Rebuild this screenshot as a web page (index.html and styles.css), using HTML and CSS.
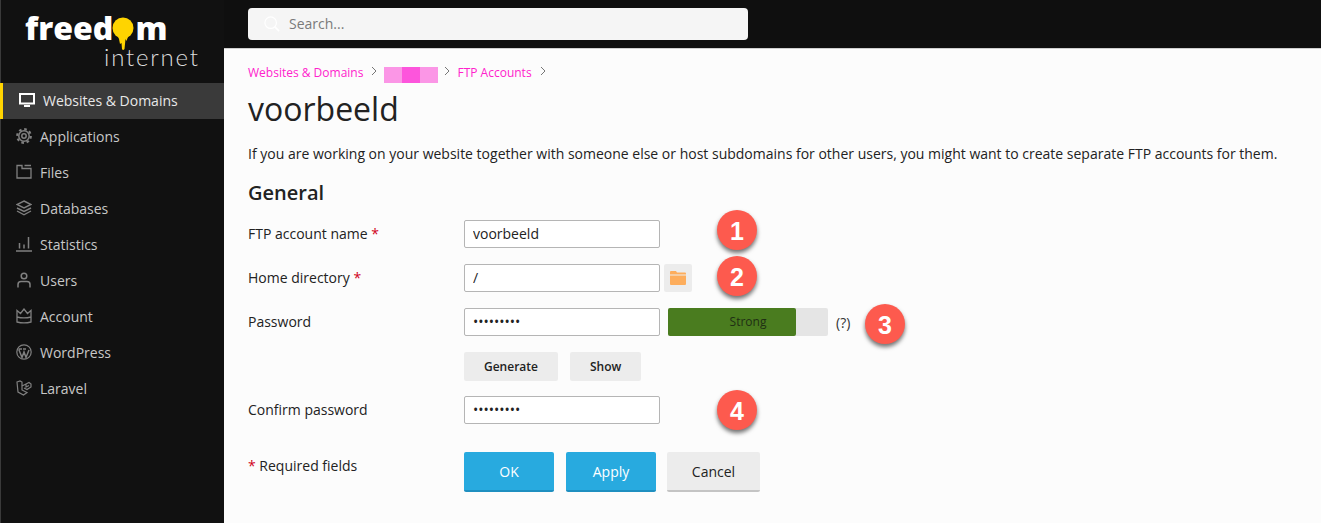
FILE: index.html
```html
<!DOCTYPE html>
<html lang="en">
<head>
    <meta charset="UTF-8">
    <meta name="viewport" content="width=device-width, initial-scale=1.0">
    <title>FTP Accounts - voorbeeld</title>
    <link rel="stylesheet" href="styles.css">
</head>
<body>
    <aside class="sidebar">
        <div class="logo">
            <div class="logo-top">freed<svg class="logo-drop" viewBox="0 0 22 34" width="22" height="34"><circle cx="11" cy="11" r="10.500" fill="#ffd400"/><path d="M5 17 H17 L14.500 24 L13.500 22 L12.500 32 Q11 34 10 32 L9.500 26 L8 27 L7 22 Z" fill="#ffd400"/></svg>m</div>
            <div class="logo-sub">internet</div>
        </div>
        <nav class="nav">
            <a class="nav-item active" href="#">
                <svg class="nav-icon" viewBox="0 0 16 16"><path d="M1 2 H15 V11.500 H1 Z M5 14 H11" fill="none" stroke="currentColor" stroke-width="2"/></svg>
                Websites &amp; Domains
            </a>
            <a class="nav-item" href="#">
                <svg class="nav-icon" viewBox="0 0 16 16" fill="none" stroke="currentColor"><circle cx="8" cy="8" r="2.200" stroke-width="1.500"/><circle cx="8" cy="8" r="5.200" stroke-width="1.500"/><circle cx="8" cy="8" r="6.800" stroke-width="2.200" stroke-dasharray="2.600 2.740"/></svg>
                Applications
            </a>
            <a class="nav-item" href="#">
                <svg class="nav-icon" viewBox="0 0 16 16" fill="none" stroke="currentColor" stroke-width="1.300"><path d="M1 1.500 H6 V4.500 H15 V14 H1 Z M8.500 1.500 H15"/></svg>
                Files
            </a>
            <a class="nav-item" href="#">
                <svg class="nav-icon" viewBox="0 0 16 16" fill="none" stroke="currentColor" stroke-width="1.400"><path d="M8 1 L15 4.500 L8 8 L1 4.500 Z M1 8 L8 11.500 L15 8 M1 11 L8 14.800 L15 11"/></svg>
                Databases
            </a>
            <a class="nav-item" href="#">
                <svg class="nav-icon" viewBox="0 0 16 16" fill="none" stroke="currentColor" stroke-width="1.500"><path d="M0 15 H16 M3.500 7 V12.500 M8 8.500 V12.500 M12.500 1 V12.500"/></svg>
                Statistics
            </a>
            <a class="nav-item" href="#">
                <svg class="nav-icon" viewBox="0 0 16 16" fill="none" stroke="currentColor" stroke-width="1.500"><circle cx="8" cy="4" r="2.800"/><path d="M2 15.500 V12.500 Q2 9.500 5 9.500 H11 Q14 9.500 14 12.500 V15.500"/></svg>
                Users
            </a>
            <a class="nav-item" href="#">
                <svg class="nav-icon" viewBox="0 0 16 16" fill="none" stroke="currentColor" stroke-width="1.300"><path d="M1 2.500 L4.500 5.500 L8 1 L11.500 5.500 L15 2.500 V14 Q8 15.800 1 14 Z M1 9 Q8 10.800 15 9"/></svg>
                Account
            </a>
            <a class="nav-item" href="#">
                <svg class="nav-icon" viewBox="0 0 16 16" fill="none" stroke="currentColor"><circle cx="8" cy="8" r="7.200" stroke-width="1.200"/><path d="M2.800 5.500 L6 13.500 L8 8 L10 13.500 L13 6 M2.500 5 H6 M7 5 H10" stroke-width="1.500"/></svg>
                WordPress
            </a>
            <a class="nav-item" href="#">
                <svg class="nav-icon" viewBox="0 0 16 16" fill="none" stroke="currentColor" stroke-width="1.200"><path d="M1 2 L4 1 L6 2 V10 L11 12.500 L7.500 15 L2 12 Z M6 6 L10 4 L13 2.500 L15 4 V7 L11 9.500 L8 8 M10 4 V7 L13 5.500"/></svg>
                Laravel
            </a>
        </nav>
    </aside>

    <div class="page">
        <header class="topbar">
            <div class="search">
                <svg class="search-icon" viewBox="0 0 18 18" fill="none" stroke="#fff" stroke-width="1.300"><circle cx="7.500" cy="7.500" r="6.500"/><path d="M12 12 L17 17" stroke-width="1.800"/></svg>
                <span>Search...</span>
            </div>
        </header>

        <main class="content">
            <div class="breadcrumb">
                <a href="#">Websites &amp; Domains</a>
                <svg class="crumb-sep" viewBox="0 0 6 10"><path d="M1 1 L5 5 L1 9" fill="none" stroke="#777"/></svg>
                <div class="blur"><i></i><i class="mid"></i><i></i></div>
                <svg class="crumb-sep" viewBox="0 0 6 10"><path d="M1 1 L5 5 L1 9" fill="none" stroke="#777"/></svg>
                <a href="#">FTP Accounts</a>
                <svg class="crumb-sep" viewBox="0 0 6 10"><path d="M1 1 L5 5 L1 9" fill="none" stroke="#777"/></svg>
            </div>

            <h1>voorbeeld</h1>
            <p class="intro">If you are working on your website together with someone else or host subdomains for other users, you might want to create separate FTP accounts for them.</p>
            <h2>General</h2>

            <form class="form">
                <div class="form-row">
                    <label for="name">FTP account name <span class="req">*</span></label>
                    <input id="name" type="text" value="voorbeeld">
                    <span class="badge badge-1">1</span>
                </div>
                <div class="form-row">
                    <label for="home">Home directory <span class="req">*</span></label>
                    <input id="home" type="text" value="/">
                    <button type="button" class="folder-btn">
                        <svg viewBox="0 0 16 14" width="16" height="14"><path d="M0 1 Q0 0 1 0 H6 L7 1.500 H15 Q16 1.500 16 2.500 V3.500 H0 Z M0 4.500 H16 V13 Q16 14 15 14 H1 Q0 14 0 13 Z" fill="#fdad5c"/></svg>
                    </button>
                    <span class="badge badge-2">2</span>
                </div>
                <div class="form-row">
                    <label for="pwd">Password</label>
                    <input id="pwd" type="password" value="voorbeeld">
                    <div class="strength"><div class="strength-bar"><span>Strong</span></div></div>
                    <span class="hint">(?)</span>
                    <span class="badge badge-3">3</span>
                </div>
                <div class="form-row form-row-btns">
                    <button type="button" class="small-btn">Generate</button>
                    <button type="button" class="small-btn">Show</button>
                </div>
                <div class="form-row">
                    <label for="pwd2">Confirm password</label>
                    <input id="pwd2" type="password" value="voorbeeld">
                    <span class="badge badge-4">4</span>
                </div>
                <div class="form-actions">
                    <div class="required-note"><span class="req">*</span> Required fields</div>
                    <button type="button" class="btn btn-primary">OK</button>
                    <button type="button" class="btn btn-primary">Apply</button>
                    <button type="button" class="btn btn-cancel">Cancel</button>
                </div>
            </form>
        </main>
    </div>
</body>
</html>
```

FILE: styles.css
```css
/* General Reset */
* {
    box-sizing: border-box;
    margin: 0;
    padding: 0;
    font-family: "Open Sans", "Liberation Sans", sans-serif;
}

html, body {
    height: 100%;
    overflow: hidden;
}

body {
    display: flex;
    background-color: #0f0f0f;
    color: #222;
    font-size: 14px;
}

/* Sidebar */
.sidebar {
    width: 224px;
    flex-shrink: 0;
    background-color: #111;
    border-left: 1px solid #3a3a3a;
}

.logo {
    height: 83px;
    padding: 12px 0 0 24px;
    color: #fff;
}

.logo-top {
    display: flex;
    align-items: flex-start;
    height: 32px;
    font-size: 32px;
    font-weight: 800;
    line-height: 32px;
}

.logo-drop {
    margin: 5px 1px 0 -1px;
    flex-shrink: 0;
}

.logo-sub {
    margin: 1px 0 0 79px;
    font-family: "Lato", sans-serif;
    font-size: 24px;
    font-weight: 300;
    line-height: 24px;
    letter-spacing: 1.800px;
    color: #ddd;
}

.nav-item {
    display: flex;
    align-items: center;
    height: 36px;
    padding-left: 15px;
    padding-bottom: 2px;
    color: #c8c8c8;
    text-decoration: none;
}

.nav-icon {
    width: 16px;
    height: 16px;
    margin-right: 8px;
    flex-shrink: 0;
    color: #808080;
}

.nav-item.active {
    background-color: #3a3a3a;
    border-left: 3px solid #ffd400;
    margin-left: -1px;
    padding-left: 16px;
    color: #e8e8e8;
}

.nav-item.active .nav-icon {
    color: #fff;
}

/* Top bar */
.page {
    flex: 1;
    min-width: 0;
    display: flex;
    flex-direction: column;
}

.topbar {
    height: 49px;
    flex-shrink: 0;
    padding: 8px 24px;
    background-color: #0f0f0f;
    border-bottom: 1px solid #cfcfcf;
}

.search {
    display: flex;
    align-items: center;
    width: 500px;
    height: 32px;
    padding-left: 16px;
    padding-bottom: 1px;
    background-color: #f5f5f5;
    border-radius: 4px;
    color: #7a7a7a;
}

.search-icon {
    width: 16px;
    height: 16px;
    margin-right: 9px;
}

/* Content */
.content {
    flex: 1;
    padding: 15px 24px 0;
    background-color: #fcfcfc;
}

.breadcrumb {
    display: flex;
    align-items: center;
    height: 16px;
    font-size: 12px;
}

.breadcrumb a {
    color: #ff22cc;
    text-decoration: none;
}

.crumb-sep {
    width: 6px;
    height: 10px;
    margin: -2px 7px 0 8px;
}

.blur {
    display: flex;
    height: 16px;
    margin-top: 6px;
    margin-right: -2px;
}

.blur i {
    width: 18px;
    background-color: #fb96e6;
}

.blur .mid {
    background-color: #fd55dc;
}

h1 {
    margin-top: 8px;
    font-size: 32px;
    font-weight: 400;
    line-height: 42px;
    color: #222;
}

.intro {
    margin-top: 14px;
    line-height: 20px;
}

h2 {
    margin-top: 16px;
    font-size: 20px;
    font-weight: 600;
    line-height: 26px;
}

/* Form */
.form {
    margin-top: 14px;
}

.form-row {
    display: flex;
    align-items: center;
    height: 28px;
    margin-bottom: 16px;
    position: relative;
}

.form-row label {
    width: 216px;
    flex-shrink: 0;
    padding-bottom: 2px;
}

.req {
    color: #d0021b;
}

input {
    width: 196px;
    height: 28px;
    padding: 0 8px 1px;
    background-color: #fff;
    border: 1px solid #b5b5b5;
    border-radius: 2px;
    color: #222;
    font-size: 14px;
}

input:focus {
    outline: none;
}

.folder-btn {
    width: 28px;
    height: 28px;
    margin-left: 4px;
    display: flex;
    align-items: center;
    justify-content: center;
    background-color: #ececec;
    border: none;
    border-radius: 2px;
}

.strength {
    width: 160px;
    height: 28px;
    margin-left: 8px;
    background-color: #e5e5e5;
    border-radius: 2px;
}

.strength-bar {
    width: 128px;
    height: 28px;
    background-color: #4a7c1f;
    border-radius: 2px;
    color: #1f2f14;
    font-size: 12px;
    line-height: 28px;
    text-align: center;
    white-space: nowrap;
}

.strength-bar span {
    padding-left: 32px;
}

.hint {
    margin-left: 8px;
    font-size: 14px;
    color: #333;
}

.form-row-btns {
    height: 29px;
    padding-left: 216px;
    gap: 12px;
    margin-bottom: 15px;
}

.small-btn {
    height: 29px;
    padding: 0 20px;
    background-color: #ececec;
    border: none;
    border-radius: 2px;
    color: #222;
    font-size: 12px;
    font-weight: 600;
}

.form-actions {
    display: flex;
    align-items: flex-start;
    gap: 12px;
    margin-top: 28px;
}

.required-note {
    width: 204px;
    line-height: 28px;
}

.btn {
    width: 90px;
    height: 40px;
    background-color: #ececec;
    border: none;
    border-bottom: 2px solid #c4c4c4;
    border-radius: 2px;
    color: #222;
    font-size: 14px;
    font-weight: 500;
}

.btn-primary {
    background-color: #28aadf;
    border-bottom-color: #1f8fc0;
    color: #fff;
}

.btn-cancel {
    width: 93px;
    margin-left: -1px;
}

/* Numbered callouts over the screenshot */
.badge {
    position: absolute;
    left: 469px;
    width: 40px;
    height: 40px;
    border-radius: 50%;
    background-color: #fd5a4e;
    box-shadow: 0 3px 4px rgba(0, 0, 0, 0.55);
    color: #fff;
    font-family: "Liberation Sans", sans-serif;
    font-size: 25px;
    font-weight: 700;
    line-height: 42px;
    text-align: center;
}

.badge-1 {
    top: -10px;
}

.badge-2 {
    top: -8px;
}

.badge-3 {
    top: -4px;
    left: 617px;
}

.badge-4 {
    top: -6px;
}
```
